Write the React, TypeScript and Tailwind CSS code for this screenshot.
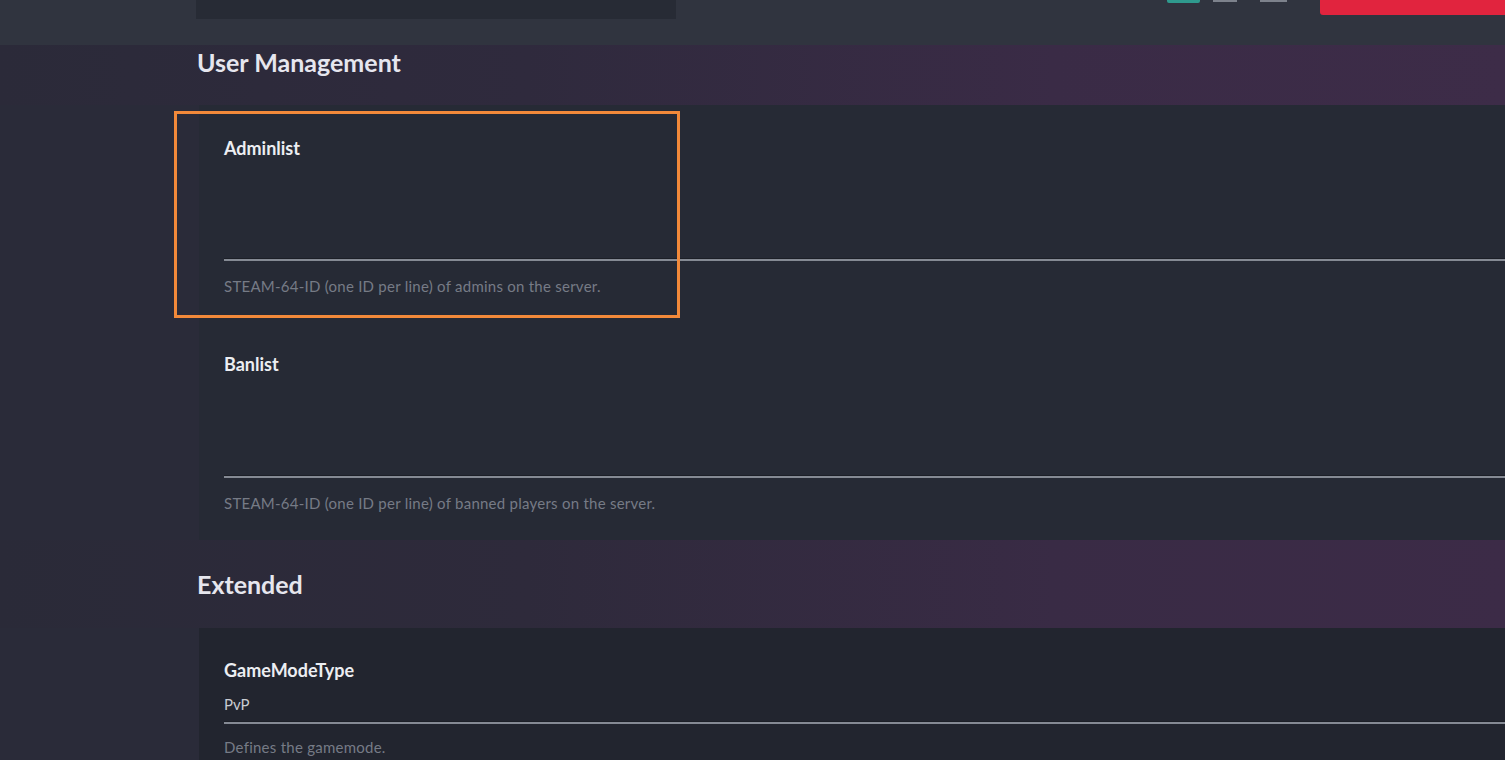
import React from "react";

function Field({ label, help, value, areaH, helpMt = 16 }: { label: string; help: string; value?: string; areaH: number; helpMt?: number }) {
  return (
    <div className="flex flex-col">
      <div className="text-[18px] leading-[20px] font-bold text-[#eceef2]">{label}</div>
      {value !== undefined ? (
        <div className="mt-[14px] h-[27px] text-[15px] leading-[20px] text-[#c9ccd2]">{value}</div>
      ) : (
        <div style={{ height: areaH }} />
      )}
      <div className="h-[2px] bg-[#858a94] border-t border-[#1c1f27] box-content" />
      <div style={{ marginTop: helpMt }} className="text-[15px] tracking-[0.25px] leading-[18px] text-[#767b86]">{help}</div>
    </div>
  );
}

export default function App() {
  return (
    <div
      className="relative w-[1505px] h-[760px] overflow-hidden bg-[#2a2b39]"
      style={{ fontFamily: "Lato, 'Open Sans', sans-serif" }}
    >
      {/* top bar */}
      <div className="h-[45px] bg-[#30343f] flex items-start pl-[196px]">
        <div className="w-[480px] h-[19px] bg-[#272b35]" />
        <div className="flex-1" />
        <div className="w-[33px] h-[3px] bg-[#2f9a8e] rounded-b-[2px]" />
        <div className="ml-[13px] w-[24px] h-[2px] bg-[#7d828c]" />
        <div className="ml-[23px] w-[27px] h-[2px] bg-[#7d828c]" />
        <div className="ml-[33px] w-[185px] h-[15px] bg-[#e1243e] rounded-bl-[3px]" />
      </div>

      {/* User Management header */}
      <div className="h-[60px] pt-[5px] pl-[197px] bg-[linear-gradient(90deg,#2b2a39_0%,#2f2a3d_35%,#3a2b46_70%,#3d2c48_100%)]">
        <h2 className="text-[25px] leading-[24px] font-bold text-[#e6e6ee]">User Management</h2>
      </div>

      {/* card 1 */}
      <div className="pl-[199px]">
        <div className="h-[435px] bg-[#262a35] pl-[25px] pt-[33px] flex flex-col">
          <Field label="Adminlist" areaH={100} help="STEAM-64-ID (one ID per line) of admins on the server." />
          <div className="h-[59px]" />
          <Field label="Banlist" areaH={101} help="STEAM-64-ID (one ID per line) of banned players on the server." />
        </div>
      </div>

      {/* Extended header */}
      <div className="h-[88px] pt-[32px] pl-[197px] bg-[linear-gradient(90deg,#2a2a38_0%,#2e2a3b_35%,#392b45_70%,#3c2b47_100%)]">
        <h2 className="text-[25px] leading-[24px] font-bold text-[#e6e6ee]">Extended</h2>
      </div>

      {/* card 2 */}
      <div className="pl-[199px]">
        <div className="h-[200px] bg-[#22252f] pl-[25px] pt-[32px] flex flex-col">
          <Field label="GameModeType" value="PvP" areaH={0} helpMt={14} help="Defines the gamemode." />
        </div>
      </div>

      {/* highlight annotation */}
      <div className="absolute left-[174px] top-[111px] w-[506px] h-[207px] border-[3px] border-[#f2893a]" />
    </div>
  );
}
